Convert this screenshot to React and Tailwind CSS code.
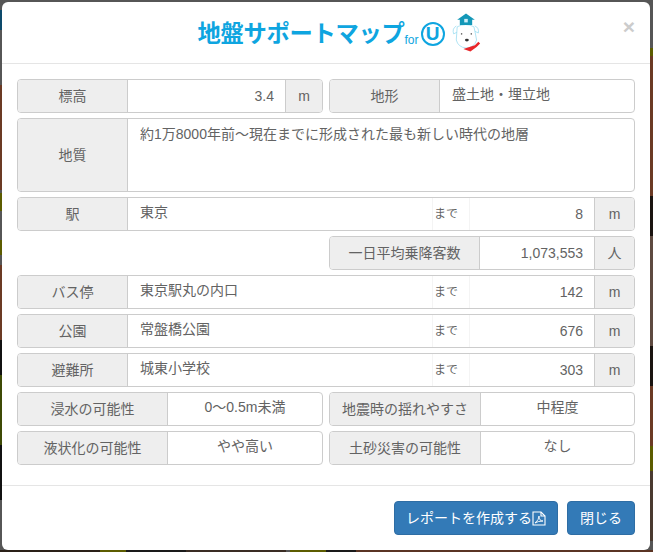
const FONT = { fontFamily: '"Liberation Sans","Noto Sans CJK JP",sans-serif' };

function Addon({ w, children, last }) {
  return (
    <div className={`${w} shrink-0 flex items-center justify-center bg-[#eeeeee] ${last ? "border-l" : "border-r"} border-[#cccccc]`}>
      {children}
    </div>
  );
}

function Group({ className = "", children }) {
  return (
    <div className={`flex h-[34px] rounded-[4px] border border-[#cccccc] overflow-hidden bg-white ${className}`}>
      {children}
    </div>
  );
}

function Half({ label, labelW, value }) {
  return (
    <Group className="flex-1">
      <Addon w={labelW}>{label}</Addon>
      <div className="flex-1 flex items-center justify-center pb-[3px]">{value}</div>
    </Group>
  );
}

function Place({ label, name, value }) {
  return (
    <Group>
      <Addon w="w-[110px]">{label}</Addon>
      <div className="flex-1 flex items-center pl-[12px] pb-[3px]">{name}</div>
      <div className="w-[38px] flex items-center pl-[1px] text-[12px] border-x border-[#f4f4f4]">まで</div>
      <div className="w-[124px] flex items-center justify-end pr-[11px]">{value}</div>
      <Addon w="w-[40px]" last>m</Addon>
    </Group>
  );
}

function Backdrop() {
  const patches = [
    // left edge
    [0, 10, 2, 20, "#0d4a6b"], [0, 85, 2, 105, "#6b3a24"], [0, 193, 2, 18, "#5c5c00"], [0, 240, 2, 15, "#5c5c00"],
    [0, 265, 2, 75, "#6b3a24"], [0, 340, 2, 35, "#111111"], [0, 375, 2, 70, "#3d4a05"], [0, 445, 2, 55, "#111111"],
    // right edge
    [650, 48, 3, 8, "#5c5c00"], [650, 56, 3, 140, "#6b3a24"], [650, 196, 3, 40, "#1a1410"], [650, 236, 3, 110, "#5e4a40"],
    [650, 346, 3, 40, "#1a1410"], [650, 386, 3, 60, "#6b3a24"], [650, 446, 3, 25, "#5c5c00"], [650, 471, 3, 70, "#4a3a30"],
    // bottom edge
    [0, 550, 100, 2, "#2a2018"], [100, 550, 26, 2, "#5c5c00"], [126, 550, 60, 2, "#1a1a1a"], [186, 550, 100, 2, "#3a2c24"],
    [290, 550, 36, 2, "#5c5c00"], [326, 550, 30, 2, "#1a1a1a"], [356, 550, 297, 2, "#5a3424"],
  ];
  return (
    <svg width="653" height="552" className="absolute inset-0">
      {patches.map(([x, y, w, h, c], i) => (
        <rect key={i} x={x} y={y} width={w} height={h} fill={c} />
      ))}
    </svg>
  );
}

export default function App() {
  return (
    <div className="relative h-[552px] w-[653px] overflow-hidden bg-[#565656] pt-[2px] pl-[2px]" style={FONT}>
      <Backdrop />
      <div className="relative w-[648px] h-[548px] bg-white rounded-[6px] flex flex-col text-[14px] text-[#636363]">
        <header className="relative h-[62px] shrink-0 border-b border-[#e5e5e5] flex items-center justify-center">
          <div className="flex items-end ml-[26px] mb-[6px] text-[#0ea5e0] font-bold leading-none">
            <span className="text-[23.3px] tracking-[-0.3px]">地盤サポートマップ</span>
            <span className="text-[12px] font-normal mb-[1px]">for</span>
            <span className="w-[24px] h-[24px] rounded-full border-2 border-[#0ea5e0] flex items-center justify-center text-[19px] ml-[2px] mb-[1px]">U</span>
            <svg width="30" height="40" viewBox="0 0 34 44" className="mb-[-6px] ml-[6px]">
              <path d="M6 14 Q1 17 3 23 L7 21 M27 14 Q32 16 31 22 L27 20" fill="#fff" stroke="#8fd8f0" strokeWidth="0.8" />
              <path d="M7 15 Q17 10 26 15 Q28 24 29 30 Q26 39 17 39 Q8 38 6 30 Z" fill="#fff" stroke="#8fd8f0" strokeWidth="0.8" />
              <path d="M17 0 L27 7 L24 7 L24 13 L10 13 L10 7 L7 7 Z" fill="#1498b8" />
              <rect x="15" y="6" width="4" height="4" fill="#cfeef8" />
              <circle cx="12" cy="23" r="0.9" fill="#666" />
              <circle cx="23" cy="23" r="0.9" fill="#666" />
              <ellipse cx="18" cy="30" rx="2.2" ry="1.6" fill="#333" />
              <path d="M14 40 L27 36 L31 32 L33 34 L29 38 L22 43 Z" fill="#e8262a" />
            </svg>
          </div>
          <button className="absolute right-[15px] top-[14px] text-[#cccccc] font-bold text-[21px] leading-none">×</button>
        </header>

        <main className="flex-1 px-[15px] pt-[15px] flex flex-col gap-[5px]">
          <div className="flex gap-[6px]">
            <Group className="flex-1">
              <Addon w="w-[110px]">標高</Addon>
              <div className="flex-1 flex items-center justify-end pr-[11px]">3.4</div>
              <Addon w="w-[37px]" last>m</Addon>
            </Group>
            <Group className="flex-1">
              <Addon w="w-[110px]">地形</Addon>
              <div className="flex-1 flex items-center pl-[12px] pb-[3px]">盛土地・埋立地</div>
            </Group>
          </div>

          <Group className="h-[74px]">
            <Addon w="w-[110px]">地質</Addon>
            <div className="flex-1 pl-[12px] pt-[5px] leading-[20px]">約1万8000年前～現在までに形成された最も新しい時代の地層</div>
          </Group>

          <Place label="駅" name="東京" value="8" />

          <div className="flex justify-end">
            <Group className="w-[306px]">
              <Addon w="w-[150px]">一日平均乗降客数</Addon>
              <div className="flex-1 flex items-center justify-end pr-[11px]">1,073,553</div>
              <Addon w="w-[40px]" last>人</Addon>
            </Group>
          </div>

          <Place label="バス停" name="東京駅丸の内口" value="142" />
          <Place label="公園" name="常盤橋公園" value="676" />
          <Place label="避難所" name="城東小学校" value="303" />

          <div className="flex gap-[6px]">
            <Half label="浸水の可能性" labelW="w-[150px]" value="0～0.5m未満" />
            <Half label="地震時の揺れやすさ" labelW="w-[151px]" value="中程度" />
          </div>
          <div className="flex gap-[6px]">
            <Half label="液状化の可能性" labelW="w-[150px]" value="やや高い" />
            <Half label="土砂災害の可能性" labelW="w-[151px]" value="なし" />
          </div>
        </main>

        <footer className="h-[65px] shrink-0 border-t border-[#e5e5e5] flex justify-end items-start gap-[9px] pt-[15px] pr-[15px]">
          <button className="w-[164px] h-[34px] rounded-[4px] bg-[#337ab7] border border-[#2e6da4] text-white flex items-center justify-center">
            レポートを作成する
            <svg width="14" height="15" viewBox="0 0 14 15" fill="none" stroke="#fff" strokeWidth="1.1">
              <path d="M1 1 H9 L13 5 V14 H1 Z" />
              <path d="M9 1 V5 H13" />
              <path d="M3 12 Q7 9 7 5 Q7 10 11 10 Q6 10 3 12Z" strokeWidth="0.9" />
            </svg>
          </button>
          <button className="w-[68px] h-[34px] rounded-[4px] bg-[#337ab7] border border-[#2e6da4] text-white">閉じる</button>
        </footer>
      </div>
    </div>
  );
}
